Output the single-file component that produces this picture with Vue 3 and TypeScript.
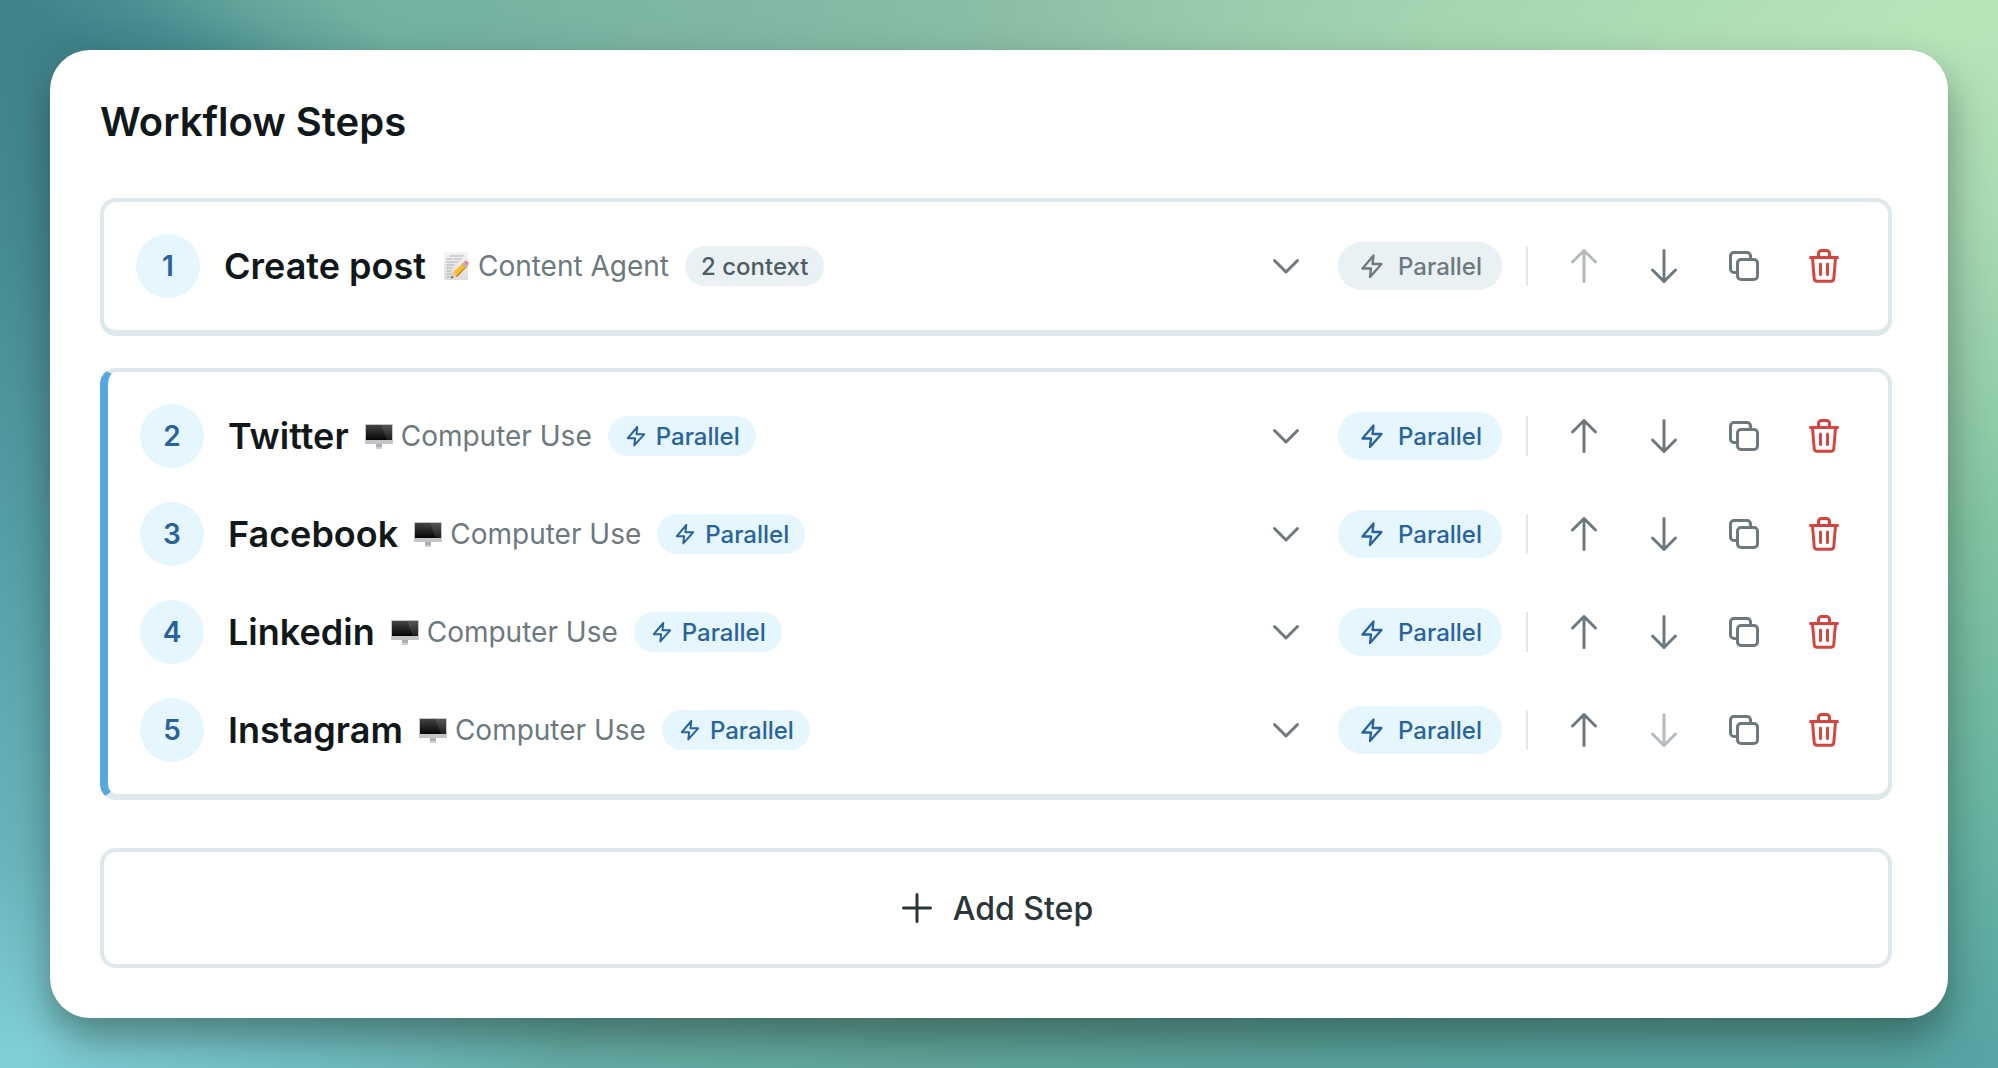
<script setup lang="ts">
import { ref, computed } from 'vue'

interface Step {
  id: number
  name: string
  agent: string
  kind: 'content' | 'computer'
  context: number
  parallel: boolean
}

const steps = ref<Step[]>([
  { id: 1, name: 'Create post', agent: 'Content Agent', kind: 'content', context: 2, parallel: false },
  { id: 2, name: 'Twitter', agent: 'Computer Use', kind: 'computer', context: 0, parallel: true },
  { id: 3, name: 'Facebook', agent: 'Computer Use', kind: 'computer', context: 0, parallel: true },
  { id: 4, name: 'Linkedin', agent: 'Computer Use', kind: 'computer', context: 0, parallel: true },
  { id: 5, name: 'Instagram', agent: 'Computer Use', kind: 'computer', context: 0, parallel: true },
])

// Consecutive parallel steps share one box.
const groups = computed(() => {
  const out: { parallel: boolean; items: { step: Step; index: number }[] }[] = []
  steps.value.forEach((step, index) => {
    const last = out[out.length - 1]
    if (last && last.parallel && step.parallel) last.items.push({ step, index })
    else out.push({ parallel: step.parallel, items: [{ step, index }] })
  })
  return out
})

function move(index: number, by: number) {
  const list = steps.value
  const [step] = list.splice(index, 1)
  list.splice(index + by, 0, step)
}

function duplicate(index: number) {
  const id = Math.max(...steps.value.map((s) => s.id)) + 1
  steps.value.splice(index + 1, 0, { ...steps.value[index], id })
}

function remove(index: number) {
  steps.value.splice(index, 1)
}

function add() {
  const id = Math.max(0, ...steps.value.map((s) => s.id)) + 1
  steps.value.push({ id, name: 'New step', agent: 'Content Agent', kind: 'content', context: 0, parallel: false })
}
</script>

<template>
  <main class="page">
    <section class="card">
      <h1>Workflow Steps</h1>
      <div class="groups">
        <div v-for="(group, g) in groups" :key="g" class="group" :class="{ linked: group.parallel }">
          <div v-for="{ step, index } in group.items" :key="step.id" class="row">
            <span class="number">{{ index + 1 }}</span>
            <div class="info">
              <h2>{{ step.name }}</h2>
              <span class="agent">
                <svg v-if="step.kind === 'content'" class="emoji" viewBox="0 0 28 28" aria-hidden="true">
                  <defs>
                    <linearGradient id="paper" x1="0" y1="0" x2="0" y2="1">
                      <stop offset="0" stop-color="#f3f3f3" />
                      <stop offset="1" stop-color="#dedede" />
                    </linearGradient>
                  </defs>
                  <rect x="2" y="0" width="24" height="28" fill="url(#paper)" />
                  <path d="M8 4h4m1 0h5m1 0h3M5 7h6m1 0h7M5 10h5m1 0h6M5 13h7M5 16h6M5 19h4M5 22h5M5 25h6" stroke="#aaa" stroke-width="1" stroke-dasharray="2 1" fill="none" />
                  <path d="M9 26.500l2-6 4 4z" fill="#e8c9a0" />
                  <path d="M9 26.500l1-2.500 1.500 1.500z" fill="#444" />
                  <path d="M11 20.500L21 11l3.500 3.500L15 25q-1-3-4-4.500z" fill="#f4be2c" />
                  <path d="M14 24L24 14.500l.5.500L15 25z" fill="#b97a12" />
                  <path d="M20 12l2-2 4 3.500-2 2z" fill="#a9b3b8" />
                  <path d="M22 10q1.500-2 3.500-.5T26 13.500z" fill="#ee7f8c" />
                </svg>
                <svg v-else class="emoji" viewBox="0 0 28 28" aria-hidden="true">
                  <defs>
                    <linearGradient id="screen" x1="0" y1="0" x2="0" y2="1">
                      <stop offset="0" stop-color="#444" />
                      <stop offset="1" stop-color="#050505" />
                    </linearGradient>
                  </defs>
                  <rect x="0" y="2" width="28" height="20" rx="1" fill="#c4c4c8" />
                  <rect x="1" y="3" width="26" height="15" fill="url(#screen)" />
                  <path d="M16 3h11v15h-5z" fill="#fff" opacity=".1" />
                  <path d="M11 22h6v5h-6z" fill="#aeaeb2" />
                  <path d="M11 25h6v2h-6z" fill="#d0d0d3" />
                </svg>
                {{ step.agent }}
              </span>
              <span v-if="step.context" class="tag muted">{{ step.context }} context</span>
              <span v-if="step.parallel" class="tag">
                <svg class="bolt-small" viewBox="0 0 28 28" aria-hidden="true"><path d="M15.500 3.500L4.500 16.500H13L12 25L23.500 12H14.500Z" /></svg>
                Parallel
              </span>
            </div>
            <div class="actions">
              <button class="icon expand" type="button" aria-label="Expand step">
                <svg viewBox="0 0 36 36"><path d="M6.500 12.500L18 24L29.500 12.500" /></svg>
              </button>
              <button class="toggle" :class="{ on: step.parallel }" type="button" :aria-pressed="step.parallel" @click="step.parallel = !step.parallel">
                <svg class="bolt" viewBox="0 0 28 28" aria-hidden="true"><path d="M15.500 3.500L4.500 16.500H13L12 25L23.500 12H14.500Z" /></svg>
                Parallel
              </button>
              <span class="divider"></span>
              <div class="icons">
                <button class="icon" type="button" aria-label="Move up" :disabled="index === 0" @click="move(index, -1)">
                  <svg viewBox="0 0 36 36"><path d="M18 33.500V2.500M6.500 14L18 2.500L29.500 14" /></svg>
                </button>
                <button class="icon" type="button" aria-label="Move down" :disabled="index === steps.length - 1" @click="move(index, 1)">
                  <svg viewBox="0 0 36 36"><path d="M18 2.500V33.500M6.500 22L18 33.500L29.500 22" /></svg>
                </button>
                <button class="icon" type="button" aria-label="Duplicate" @click="duplicate(index)">
                  <svg viewBox="0 0 36 36">
                    <rect x="11.500" y="11.500" width="20" height="20" rx="3.500" />
                    <path d="M11.500 24.500H8A3.500 3.500 0 0 1 4.500 21V8A3.500 3.500 0 0 1 8 4.500H21A3.500 3.500 0 0 1 24.500 8V11.500" />
                  </svg>
                </button>
                <button class="icon danger" type="button" aria-label="Delete" @click="remove(index)">
                  <svg viewBox="0 0 36 36">
                    <path d="M4.500 9.500H31.500M12.500 9.500V5.500A3 3 0 0 1 15.500 2.500H20.500A3 3 0 0 1 23.500 5.500V9.500M6.500 9.500L8.200 30.500A3 3 0 0 0 11.200 33.300H24.800A3 3 0 0 0 27.800 30.500L29.500 9.500M14.500 16V26.500M21.500 16V26.500" />
                  </svg>
                </button>
              </div>
            </div>
          </div>
        </div>
      </div>
      <button class="add" type="button" @click="add">
        <svg viewBox="0 0 36 36" aria-hidden="true"><path d="M18 4.500V31.500M4.500 18H31.500" /></svg>
        Add Step
      </button>
    </section>
  </main>
</template>

<style>
body {
  margin: 0;
}
</style>

<style scoped>
.page {
  box-sizing: border-box;
  min-height: 100vh;
  padding: 50px;
  font-family: Inter, sans-serif;
  color: #11181a;
  background: conic-gradient(
    #8abfa6 0deg,
    #a8dab3 48deg,
    #b9e5ba 62deg,
    #a9dbb4 72deg,
    #82c4a2 90deg,
    #69b5a3 106deg,
    #57a5a3 118deg,
    #5aa39d 150deg,
    #62a69b 190deg,
    #66afa8 220deg,
    #73c2c7 234deg,
    #80d0d8 242deg,
    #6ab5bd 252deg,
    #559fa7 270deg,
    #468c92 286deg,
    #3f8289 298deg,
    #488e90 301deg,
    #62a49b 305deg,
    #72b1a0 309deg,
    #7db5a4 324deg,
    #8abfa6 360deg
  );
}

.card {
  padding: 50px 56px 50px 50px;
  border-radius: 40px;
  background: #fff;
  box-shadow: 0 20px 40px rgb(30 50 40 / 50%);
}

h1,
h2 {
  margin: 0;
  font-weight: 600;
}

h1 {
  margin-bottom: 54px;
  font-size: 40px;
  line-height: 44px;
}

.groups {
  display: flex;
  flex-direction: column;
  gap: 32px;
  margin-bottom: 48px;
}

.group {
  display: flex;
  flex-direction: column;
  gap: 34px;
  padding: 32px;
  border: 4px solid #dfe8ed;
  border-bottom-width: 6px;
  border-radius: 16px;
}

.linked {
  border-left: 8px solid #56a8df;
}

.row {
  display: flex;
  align-items: center;
  gap: 24px;
}

.number {
  display: flex;
  flex: none;
  align-items: center;
  justify-content: center;
  width: 64px;
  height: 64px;
  border-radius: 50%;
  background: #e6f6ff;
  color: #29639c;
  font-size: 28px;
  font-weight: 600;
}

.info {
  display: flex;
  flex: 1;
  align-items: center;
  gap: 16px;
  white-space: nowrap;
}

h2 {
  font-size: 36px;
  line-height: 44px;
}

.agent {
  display: flex;
  align-items: center;
  gap: 8px;
  color: #6c797f;
  font-size: 28px;
  line-height: 40px;
}

.emoji {
  width: 28px;
  height: 28px;
}

.tag {
  display: flex;
  align-items: center;
  gap: 8px;
  height: 40px;
  padding: 0 16px;
  border-radius: 20px;
  background: #e6f6ff;
  color: #29639c;
  font-size: 24px;
  font-weight: 500;
}

.muted {
  background: #e9f1f5;
  color: #4f5d63;
}

svg {
  flex: none;
  fill: none;
  stroke-linecap: round;
  stroke-linejoin: round;
}

.bolt,
.bolt-small,
.icon svg,
.add svg {
  stroke: currentColor;
}

.bolt,
.bolt-small {
  width: 28px;
  height: 28px;
  stroke-width: 2.3;
}

.bolt-small {
  width: 24px;
  height: 24px;
}

.actions,
.icons {
  display: flex;
  align-items: center;
}

.icons {
  gap: 16px;
}

button {
  display: flex;
  align-items: center;
  justify-content: center;
  padding: 0;
  border: 0;
  background: none;
  font-family: inherit;
  font-weight: 500;
  cursor: pointer;
}

.icon {
  width: 64px;
  height: 64px;
  color: #6c797f;
}

.icon:disabled {
  opacity: 0.5;
  cursor: default;
}

.icon svg {
  width: 36px;
  height: 36px;
  stroke-width: 3;
}

.danger {
  color: #d3453e;
}

.expand {
  margin-right: 20px;
}

.toggle {
  gap: 12px;
  height: 48px;
  padding: 0 20px;
  border-radius: 24px;
  background: #e9f1f5;
  color: #6c797f;
  font-size: 24px;
}

.toggle.on {
  background: #e6f6ff;
  color: #29639c;
}

.divider {
  width: 2px;
  height: 40px;
  margin: 0 24px;
  background: #dfe8ed;
}

.add {
  gap: 18px;
  width: 100%;
  height: 120px;
  border: 4px solid #dfe8ed;
  border-radius: 16px;
  color: #2a3639;
  font-size: 32px;
}

.add svg {
  width: 36px;
  height: 36px;
  stroke-width: 3;
}
</style>
